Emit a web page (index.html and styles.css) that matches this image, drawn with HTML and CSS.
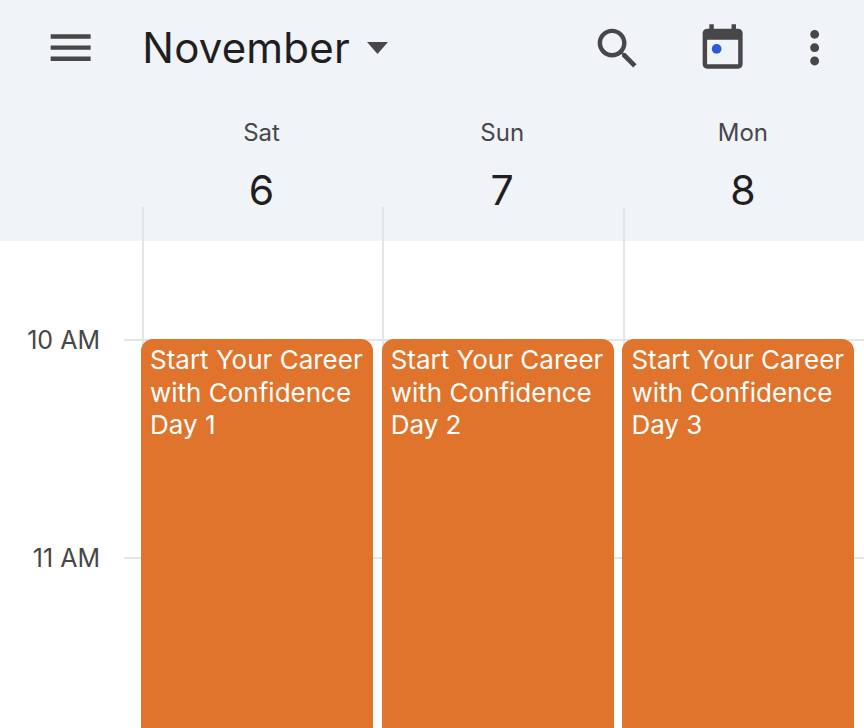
FILE: index.html
```html
<!DOCTYPE html>
<html lang="en">
<head>
    <meta charset="UTF-8">
    <meta name="viewport" content="width=device-width, initial-scale=1.0">
    <title>Calendar</title>
    <link rel="stylesheet" href="styles.css">
</head>
<body>
    <div class="app">
        <div class="header">
            <div class="toolbar">
                <svg class="icon icon-menu" viewBox="0 0 24 24"><path d="M3 18h18v-2H3v2zm0-5h18v-2H3v2zm0-7v2h18V6H3z"/></svg>
                <div class="month">November</div>
                <svg class="caret" viewBox="7 10 10 5" preserveAspectRatio="none"><path d="M7 10l5 5 5-5z"/></svg>
                <svg class="icon icon-search" viewBox="0 0 24 24"><path d="M15.5 14h-.79l-.28-.27C15.41 12.59 16 11.11 16 9.5 16 5.91 13.09 3 9.5 3S3 5.91 3 9.5 5.91 16 9.5 16c1.61 0 3.09-.59 4.23-1.57l.27.28v.79l5 4.99L20.49 19l-4.99-5zm-6 0C7.01 14 5 11.99 5 9.5S7.01 5 9.5 5 14 7.01 14 9.5 11.99 14 9.5 14z"/></svg>
                <svg class="icon icon-today" viewBox="0 0 24 24"><path d="M19 3h-1V1h-2v2H8V1H6v2H5c-1.1 0-2 .9-2 2v14c0 1.1.9 2 2 2h14c1.1 0 2-.9 2-2V5c0-1.1-.9-2-2-2zm0 16H5V8h14v11z"/><circle class="today-dot" cx="9.3" cy="12.1" r="2.2"/></svg>
                <svg class="icon icon-more" viewBox="0 0 24 24"><path d="M12 8c1.1 0 2-.9 2-2s-.9-2-2-2-2 .9-2 2 .9 2 2 2zm0 2c-1.1 0-2 .9-2 2s.9 2 2 2 2-.9 2-2-.9-2-2-2zm0 6c-1.1 0-2 .9-2 2s.9 2 2 2 2-.9 2-2-.9-2-2-2z"/></svg>
            </div>
            <div class="days">
                <div class="day">
                    <div class="day-name">Sat</div>
                    <div class="day-num">6</div>
                    <div class="day-tick"></div>
                </div>
                <div class="day">
                    <div class="day-name">Sun</div>
                    <div class="day-num">7</div>
                    <div class="day-tick"></div>
                </div>
                <div class="day">
                    <div class="day-name">Mon</div>
                    <div class="day-num">8</div>
                    <div class="day-tick"></div>
                </div>
            </div>
        </div>
        <div class="schedule">
            <div class="hour">
                <div class="hour-label">10 AM</div>
                <div class="hour-line"></div>
            </div>
            <div class="hour">
                <div class="hour-label">11 AM</div>
                <div class="hour-line"></div>
            </div>
            <!-- columns sit over the hour lines -->
            <div class="columns">
                <div class="column">
                    <div class="event">Start Your Career with Confidence Day 1</div>
                </div>
                <div class="column">
                    <div class="event">Start Your Career with Confidence Day 2</div>
                </div>
                <div class="column">
                    <div class="event">Start Your Career with Confidence Day 3</div>
                </div>
            </div>
        </div>
    </div>
</body>
</html>
```

FILE: styles.css
```css
body {
    font-family: Inter, Roboto, Arial, sans-serif;
    background-color: #fff;
    margin: 0;
}

.app {
    width: 864px;
    height: 728px;
    overflow: hidden;
    display: flex;
    flex-direction: column;
}

.header {
    background: #f0f3f8;
    height: 241px;
    flex-shrink: 0;
    display: flex;
    flex-direction: column;
}

.toolbar {
    display: flex;
    align-items: center;
    height: 96px;
    padding: 0 23px 0 44px;
    flex-shrink: 0;
}

.icon {
    width: 53.3px;
    height: 53.3px;
    flex-shrink: 0;
    fill: #474747;
}

.month {
    margin-left: 45px;
    font-size: 42px;
    line-height: 50px;
    letter-spacing: 0.2px;
    color: #1f1f1f;
}

.caret {
    width: 21px;
    height: 12px;
    margin-left: 17px;
    fill: #474747;
}

.icon-search {
    margin-left: auto;
    margin-top: 2px;
}

.icon-today {
    margin-left: 52px;
    margin-top: 2px;
}

.today-dot {
    fill: #2a5bd7;
}

.icon-more {
    margin-left: 38.5px;
}

.days {
    display: flex;
    padding-left: 141.7px;
    flex: 1;
}

.day {
    width: 240.7px;
    display: flex;
    flex-direction: column;
    text-align: center;
}

.day-name {
    font-size: 24px;
    line-height: 28px;
    margin-top: 23px;
    padding-right: 1px;
    color: #474747;
}

.day-num {
    font-size: 41px;
    line-height: 48px;
    margin-top: 19px;
    padding-right: 1px;
    color: #1f1f1f;
}

.day-tick {
    flex: 1;
    margin-top: -7px;
    border-left: 2px solid #e3e5e8;
}

.schedule {
    position: relative;
    flex: 1;
    padding-top: 85px;
}

.hour {
    display: flex;
    align-items: center;
    height: 28px;
    margin-bottom: 190px;
}

.hour-label {
    width: 100px;
    text-align: right;
    font-size: 25px;
    line-height: 28px;
    color: #474747;
}

.hour-line {
    flex: 1;
    height: 2px;
    margin-left: 24px;
    background: #e3e5e8;
}

.columns {
    position: absolute;
    top: 0;
    bottom: 0;
    left: 141.7px;
    display: flex;
}

.column {
    width: 240.7px;
    border-left: 2px solid #e3e5e8;
    box-sizing: border-box;
    padding-top: 98px;
}

.event {
    height: 400px;
    width: 232px;
    margin-left: -2.7px;
    box-sizing: border-box;
    padding: 5px 9px;
    background: #e0742c;
    border-radius: 12px;
    color: #fff;
    font-size: 26px;
    line-height: 32.5px;
}
```
